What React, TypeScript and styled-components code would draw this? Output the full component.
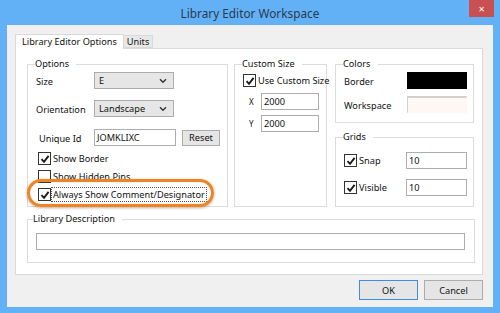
import React from "react";
import styled, { createGlobalStyle } from "styled-components";

const GlobalStyle = createGlobalStyle`
  html, body {
    margin: 0;
    padding: 0;
    background: #62b1f6;
  }
  * {
    box-sizing: border-box;
  }
`;

const CheckIcon = () => (
  <svg width="10" height="10" viewBox="0 0 10 10">
    <path d="M1.5 5.2 L4 7.8 L8.6 1.8" fill="none" stroke="#1a1a1a" strokeWidth="1.9" />
  </svg>
);

const ChevronIcon = () => (
  <svg width="8" height="6" viewBox="0 0 8 6">
    <path d="M1 1.2 L4 4.2 L7 1.2" fill="none" stroke="#333" strokeWidth="1.4" />
  </svg>
);

const Check: React.FC<{ checked?: boolean; label: string; focused?: boolean }> = ({
  checked,
  label,
  focused,
}) => (
  <CheckRow>
    <CheckBox>{checked && <CheckIcon />}</CheckBox>
    <CheckLabel $focused={focused}>{label}</CheckLabel>
  </CheckRow>
);

const App: React.FC = () => {
  return (
    <>
      <GlobalStyle />
      <Window>
        <TitleBar>
          <Title>Library Editor Workspace</Title>
          <CloseButton>✕</CloseButton>
        </TitleBar>
        <Client>
          <Tabs>
            <Tab $active>Library Editor Options</Tab>
            <Tab>Units</Tab>
          </Tabs>
          <Panel>
            <Columns>
              <Group $width={201} $height={150}>
                <Legend>Options</Legend>
                <FieldRow $top={1}>
                  <FieldLabel>Size</FieldLabel>
                  <Combo>
                    E
                    <ChevronIcon />
                  </Combo>
                </FieldRow>
                <FieldRow $top={11}>
                  <FieldLabel>Orientation</FieldLabel>
                  <Combo>
                    Landscape
                    <ChevronIcon />
                  </Combo>
                </FieldRow>
                <FieldRow $top={12}>
                  <FieldLabel $indent={3}>Unique Id</FieldLabel>
                  <TextInput $width={82}>JOMKLIXC</TextInput>
                  <Button $width={38} $height={16}>Reset</Button>
                </FieldRow>
                <CheckList>
                  <Check checked label="Show Border" />
                  <Check label="Show Hidden Pins" />
                  <Check checked focused label="Always Show Comment/Designator" />
                  <Highlight />
                </CheckList>
              </Group>
              <Group $width={93} $height={150}>
                <Legend>Custom Size</Legend>
                <CustomCheck>
                  <Check checked label="Use Custom Size" />
                </CustomCheck>
                <SizeRows>
                  <SizeRow>
                    <AxisLabel>X</AxisLabel>
                    <TextInput $width={58}>2000</TextInput>
                  </SizeRow>
                  <SizeRow>
                    <AxisLabel>Y</AxisLabel>
                    <TextInput $width={58}>2000</TextInput>
                  </SizeRow>
                </SizeRows>
              </Group>
              <RightColumn>
                <Group $width={139} $height={66}>
                  <Legend>Colors</Legend>
                  <SwatchRows>
                    <SwatchRow>
                      <FieldLabel $width={63}>Border</FieldLabel>
                      <Swatch $color="#000000" />
                    </SwatchRow>
                    <SwatchRow>
                      <FieldLabel $width={63}>Workspace</FieldLabel>
                      <Swatch $color="#fdf8f4" $open />
                    </SwatchRow>
                  </SwatchRows>
                </Group>
                <Group $width={139} $height={77}>
                  <Legend>Grids</Legend>
                  <GridRows>
                    <SwatchRow>
                      <CheckCell>
                        <Check checked label="Snap" />
                      </CheckCell>
                      <TextInput $width={61}>10</TextInput>
                    </SwatchRow>
                    <SwatchRow>
                      <CheckCell>
                        <Check checked label="Visible" />
                      </CheckCell>
                      <TextInput $width={61}>10</TextInput>
                    </SwatchRow>
                  </GridRows>
                </Group>
              </RightColumn>
            </Columns>
            <DescGroup>
              <Legend $shift={-3}>Library Description</Legend>
              <TextInput $width={429} />
            </DescGroup>
          </Panel>
          <Footer>
            <Button $width={59} $height={20} $default>
              OK
            </Button>
            <Button $width={59} $height={20}>
              Cancel
            </Button>
          </Footer>
        </Client>
      </Window>
    </>
  );
};

export default App;

const Window = styled.div`
  width: 500px;
  height: 313px;
  background: #62b1f6;
  padding: 0 7px 6px 7px;
  display: flex;
  flex-direction: column;
  font-family: "Noto Sans", "DejaVu Sans", sans-serif;
  font-size: 9.2px;
  color: #111111;
`;

const TitleBar = styled.div`
  position: relative;
  height: 25px;
  display: flex;
  align-items: center;
  justify-content: center;
`;

const Title = styled.div`
  font-family: "Noto Sans", sans-serif;
  font-size: 11.8px;
  color: #2b3a4c;
  padding-top: 1px;
`;

const CloseButton = styled.div`
  position: absolute;
  top: 0;
  right: -1px;
  width: 25px;
  height: 17px;
  background: #c85050;
  color: #fff;
  font-size: 8px;
  font-weight: 700;
  display: flex;
  align-items: center;
  justify-content: center;
`;

const Client = styled.div`
  flex: 1;
  background: #f0f0f0;
  padding: 9px 10px 0 8px;
  display: flex;
  flex-direction: column;
`;

const Tabs = styled.div`
  display: flex;
  align-items: flex-end;
  height: 14px;
  position: relative;
  z-index: 1;
`;

const Tab = styled.div<{ $active?: boolean }>`
  height: ${(p) => (p.$active ? 15 : 13)}px;
  padding: 0 ${(p) => (p.$active ? 6 : 3)}px;
  margin-bottom: ${(p) => (p.$active ? -1 : 0)}px;
  background: ${(p) => (p.$active ? "#ffffff" : "#e8e8e8")};
  border: 1px solid #d9d9d9;
  border-bottom: ${(p) => (p.$active ? "none" : "1px solid #d9d9d9")};
  border-left: ${(p) => (p.$active ? "1px solid #d9d9d9" : "none")};
  display: flex;
  align-items: center;
  line-height: 1;
`;

const Panel = styled.div`
  width: 468px;
  height: 227px;
  background: #ffffff;
  border: 1px solid #d9d9d9;
  padding: 8px 8px 0 11px;
`;

const Columns = styled.div`
  display: flex;
  align-items: flex-start;
  gap: 6px;
`;

const RightColumn = styled.div`
  display: flex;
  flex-direction: column;
  gap: 7px;
  margin-left: 2px;
`;

const Group = styled.fieldset<{ $width: number; $height: number }>`
  width: ${(p) => p.$width}px;
  height: ${(p) => p.$height}px;
  margin: 0;
  padding: 0 6px 0 8px;
  border: 1px solid #dcdcdc;
  min-width: 0;
  position: relative;
`;

const Legend = styled.legend<{ $shift?: number }>`
  padding: 0 7px 0 0;
  margin-left: ${(p) => p.$shift ?? -1}px;
  line-height: 14px;
`;

const FieldRow = styled.div<{ $top: number }>`
  display: flex;
  align-items: center;
  height: 17px;
  margin-top: ${(p) => p.$top}px;
`;

const FieldLabel = styled.div<{ $indent?: number; $width?: number }>`
  width: ${(p) => p.$width ?? 58}px;
  flex-shrink: 0;
  padding-left: ${(p) => p.$indent ?? 0}px;
  white-space: nowrap;
  padding-top: 2px;
`;

const Combo = styled.div`
  width: 80px;
  height: 17px;
  background: #e6e6e6;
  border: 1px solid #acacac;
  display: flex;
  align-items: center;
  justify-content: space-between;
  padding: 0 6px 0 4px;
`;

const TextInput = styled.div<{ $width: number }>`
  width: ${(p) => p.$width}px;
  height: 17px;
  background: #ffffff;
  border: 1px solid #abadb3;
  display: flex;
  align-items: center;
  padding-left: 2px;
  flex-shrink: 0;
`;

const Button = styled.div<{ $width: number; $height: number; $default?: boolean }>`
  width: ${(p) => p.$width}px;
  height: ${(p) => p.$height}px;
  margin-left: 6px;
  background: #e5e5e5;
  border: 1px solid ${(p) => (p.$default ? "#3c8ce8" : "#acacac")};
  display: flex;
  align-items: center;
  justify-content: center;
`;

const CheckList = styled.div`
  position: relative;
  margin-top: 6px;
  margin-left: 2px;
  display: flex;
  flex-direction: column;
  gap: 5px;
`;

const Highlight = styled.div`
  position: absolute;
  left: -11px;
  top: 27px;
  width: 187px;
  height: 28px;
  border: 3px solid #f08422;
  border-radius: 14px;
  box-shadow: 0 1px 3px rgba(0, 0, 0, 0.3), inset 0 0 1px rgba(240, 132, 34, 0.6);
  pointer-events: none;
`;

const CheckRow = styled.div`
  display: flex;
  align-items: center;
  height: 13px;
`;

const CheckBox = styled.div`
  width: 13px;
  height: 13px;
  border: 1px solid #333333;
  background: #ffffff;
  display: flex;
  align-items: center;
  justify-content: center;
  flex-shrink: 0;
`;

const CheckLabel = styled.div<{ $focused?: boolean }>`
  margin-left: 1px;
  padding: 0 1px;
  white-space: nowrap;
  line-height: 13px;
  outline: ${(p) => (p.$focused ? "1px dotted #555" : "none")};
`;

const CustomCheck = styled.div`
  margin-top: 3px;
`;

const SizeRows = styled.div`
  display: flex;
  flex-direction: column;
  gap: 5px;
  margin-top: 6px;
`;

const SizeRow = styled.div`
  display: flex;
  align-items: center;
  padding-left: 6px;
`;

const AxisLabel = styled.div`
  width: 12px;
  font-size: 8px;
`;

const SwatchRows = styled.div`
  display: flex;
  flex-direction: column;
  gap: 7px;
  margin-top: 1px;
`;

const GridRows = styled.div`
  display: flex;
  flex-direction: column;
  gap: 10px;
  margin-top: 8px;
`;

const SwatchRow = styled.div`
  display: flex;
  align-items: center;
  height: 17px;
`;

const CheckCell = styled.div`
  width: 63px;
`;

const Swatch = styled.div<{ $color: string; $open?: boolean }>`
  width: 61px;
  height: 17px;
  background: ${(p) => p.$color};
  border: 1px solid ${(p) => (p.$open ? "#d0d0d0" : "#000")};
  border-top-width: ${(p) => (p.$open ? 2 : 1)}px;
  border-right-color: ${(p) => (p.$open ? "transparent" : "#000")};
  border-bottom-color: ${(p) => (p.$open ? "transparent" : "#000")};
`;

const DescGroup = styled.fieldset`
  margin: 5px 0 0 0;
  width: 448px;
  height: 51px;
  padding: 7px 8px 0 8px;
  border: 1px solid #dcdcdc;
  min-width: 0;
`;

const Footer = styled.div`
  display: flex;
  justify-content: flex-end;
  margin-top: 5px;
`;
